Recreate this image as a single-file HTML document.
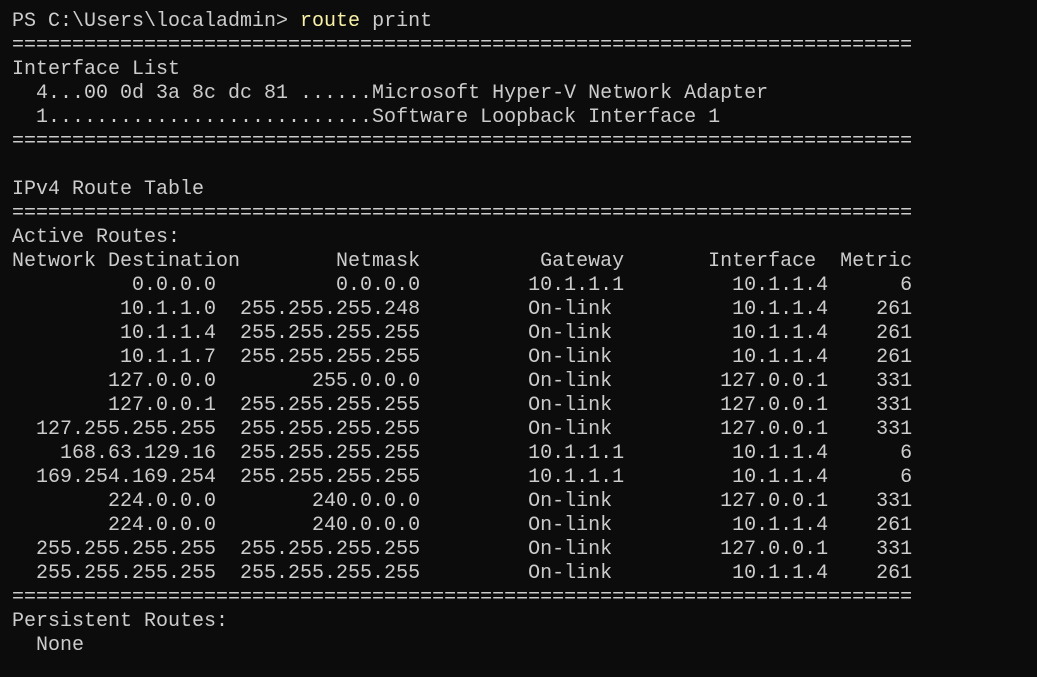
<!DOCTYPE html>
<html><head><meta charset="utf-8"><style>
html,body{margin:0;padding:0;background:#0c0c0c;width:1037px;height:677px;overflow:hidden}
pre{margin:0;padding:10px 0 0 12px;font-family:"Liberation Mono","DejaVu Sans Mono",monospace;font-size:20px;line-height:24px;color:#cccccc;letter-spacing:0}
.y{color:#f9f1a5}
</style></head><body><pre>PS C:\Users\localadmin&gt; <span class="y">route</span> print
===========================================================================
Interface List
  4...00 0d 3a 8c dc 81 ......Microsoft Hyper-V Network Adapter
  1...........................Software Loopback Interface 1
===========================================================================

IPv4 Route Table
===========================================================================
Active Routes:
Network Destination        Netmask          Gateway       Interface  Metric
          0.0.0.0          0.0.0.0         10.1.1.1         10.1.1.4      6
         10.1.1.0  255.255.255.248         On-link          10.1.1.4    261
         10.1.1.4  255.255.255.255         On-link          10.1.1.4    261
         10.1.1.7  255.255.255.255         On-link          10.1.1.4    261
        127.0.0.0        255.0.0.0         On-link         127.0.0.1    331
        127.0.0.1  255.255.255.255         On-link         127.0.0.1    331
  127.255.255.255  255.255.255.255         On-link         127.0.0.1    331
    168.63.129.16  255.255.255.255         10.1.1.1         10.1.1.4      6
  169.254.169.254  255.255.255.255         10.1.1.1         10.1.1.4      6
        224.0.0.0        240.0.0.0         On-link         127.0.0.1    331
        224.0.0.0        240.0.0.0         On-link          10.1.1.4    261
  255.255.255.255  255.255.255.255         On-link         127.0.0.1    331
  255.255.255.255  255.255.255.255         On-link          10.1.1.4    261
===========================================================================
Persistent Routes:
  None
</pre></body></html>
